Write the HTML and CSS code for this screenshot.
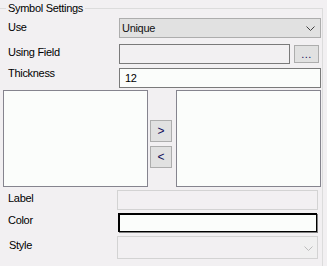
FILE: index.html
```html
<!DOCTYPE html>
<html>
<head>
	<meta charset="UTF-8">
	<title>Symbol Settings</title>
	<link rel="stylesheet" href="styles.css">
</head>
<body>
	<fieldset class="group">
		<legend>Symbol Settings</legend>

		<div class="row row-use">
			<span class="label">Use</span>
			<div class="combo">
				<span class="combo-text">Unique</span>
				<svg class="chevron" width="9" height="5" viewBox="0 0 9 5"><polyline points="0.5,0.5 4.5,4.5 8.5,0.5" fill="none" stroke="#404040" stroke-width="1"/></svg>
			</div>
		</div>

		<div class="row row-field">
			<span class="label">Using Field</span>
			<div class="textbox textbox-field"></div>
			<button class="btn btn-browse">...</button>
		</div>

		<div class="row row-thickness">
			<span class="label">Thickness</span>
			<div class="textbox textbox-thick">12</div>
		</div>

		<div class="row row-lists">
			<div class="listbox"></div>
			<div class="move-buttons">
				<button class="btn btn-move">&gt;</button>
				<button class="btn btn-move">&lt;</button>
			</div>
			<div class="listbox"></div>
		</div>

		<div class="row row-label">
			<span class="label">Label</span>
			<div class="disabled-box"></div>
		</div>

		<div class="row row-color">
			<span class="label">Color</span>
			<div class="color-box"></div>
		</div>

		<div class="row row-style">
			<span class="label label-style">Style</span>
			<div class="disabled-box disabled-combo">
				<span class="drop-area">
					<svg width="9" height="5" viewBox="0 0 9 5"><polyline points="0.5,0.5 4.5,4.5 8.5,0.5" fill="none" stroke="#bcbcbc" stroke-width="1"/></svg>
				</span>
			</div>
		</div>
	</fieldset>
</body>
</html>
```

FILE: styles.css
```css
html, body {
	overflow: hidden;
}

body {
	margin: 0;
	background-color: #f2f0f2;
	font-family: "Liberation Sans", Arial, sans-serif;
	font-size: 11px;
	letter-spacing: -0.3px;
	color: #000;
}

.group {
	box-sizing: border-box;
	width: 325px;
	height: 275px;
	margin: 0 0 0 -2px;
	padding: 0;
	border: 1px solid #dcdcdc;
}

.group legend {
	margin-left: 7px;
	padding: 0 2px;
	line-height: 17px;
}

.row {
	display: flex;
	align-items: flex-start;
}

.label {
	box-sizing: border-box;
	width: 120px;
	padding-left: 9px;
	line-height: 15px;
	white-space: nowrap;
}

/* use */
.row-use {
	margin-top: 1px;
}

.row-use .label {
	padding-top: 2px;
}

.combo {
	box-sizing: border-box;
	width: 202px;
	height: 20px;
	background-color: #e1e1e1;
	border: 1px solid #adadad;
	display: flex;
	align-items: center;
	justify-content: space-between;
	padding: 0 5px 0 2px;
	color: #111;
}

.chevron {
	display: block;
}

/* using field */
.row-field {
	margin-top: 6px;
}

.row-field .label {
	padding-top: 1px;
}

.textbox {
	box-sizing: border-box;
	height: 20px;
	border: 1px solid #7a7a7a;
	line-height: 18px;
}

.textbox-field {
	width: 171px;
	background-color: #f2f0f2;
}

.btn {
	box-sizing: border-box;
	margin: 0;
	padding: 0;
	background-color: #e1e1e1;
	border: 1px solid #adadad;
	font-family: "Liberation Sans", Arial, sans-serif;
	font-size: 11px;
	line-height: 15px;
	color: #10105a;
	cursor: pointer;
}

.btn-browse {
	width: 25px;
	height: 18px;
	margin: 1px 0 0 4px;
	letter-spacing: 0.5px;
}

/* thickness */
.row-thickness {
	margin-top: 4px;
}

.row-thickness .label {
	margin-top: -2px;
}

.textbox-thick {
	width: 202px;
	background-color: #fbfdfb;
	padding-left: 5px;
}

/* lists */
.row-lists {
	margin-top: 2px;
	padding-left: 4px;
}

.listbox {
	box-sizing: border-box;
	width: 145px;
	height: 97px;
	background-color: #fbfdfb;
	border: 1px solid #85848e;
}

.move-buttons {
	display: flex;
	flex-direction: column;
	gap: 4px;
	padding-top: 30px;
	margin: 0 4px 0 2px;
}

.btn-move {
	width: 22px;
	height: 22px;
	font-size: 12px;
}

/* label / color / style */
.row-label {
	margin-top: 3px;
}

.row-label .label,
.row-color .label,
.row-style .label {
	width: 118px;
}

.row-label .label {
	padding-top: 1px;
}

.disabled-box {
	box-sizing: border-box;
	width: 201px;
	height: 20px;
	border: 1px solid #d3d3d3;
	background-color: #f2f0f2;
}

.row-color {
	margin-top: 3px;
}

.color-box {
	box-sizing: border-box;
	width: 199px;
	height: 19px;
	margin-left: 1px;
	background-color: #fbfdfb;
	border: 1px solid #000;
	box-shadow: 1px 1px 0 #808080, inset 1px 1px 0 #000;
}

.row-style {
	margin-top: 4px;
}

.label-style {
	padding-top: 2px;
	padding-left: 10px;
}

.disabled-combo {
	height: 23px;
	display: flex;
	justify-content: flex-end;
}

.drop-area {
	width: 17px;
	height: 21px;
	background-color: #f0f0f0;
	display: flex;
	align-items: center;
	justify-content: center;
	padding-top: 2px;
	box-sizing: border-box;
}
```
